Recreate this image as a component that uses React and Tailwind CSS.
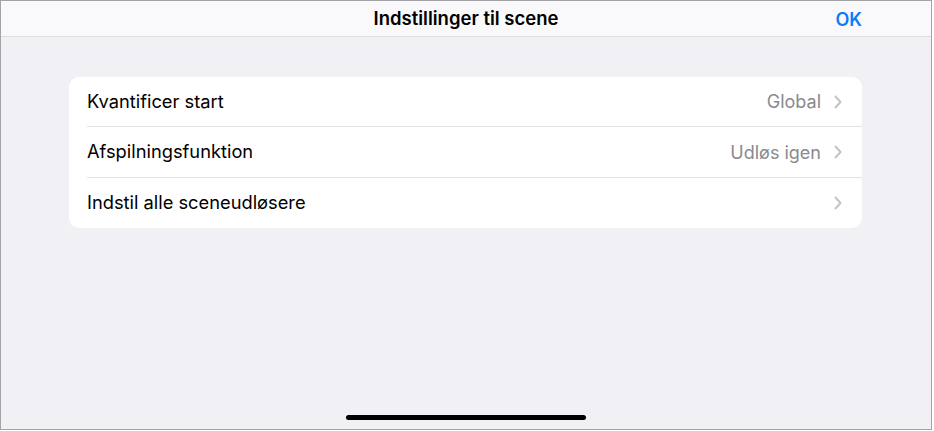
import React from "react";

function Chevron() {
  return (
    <svg width="8" height="14" viewBox="0 0 8 14" className="ml-[13px]">
      <path d="M1.5 1.5 L6.5 7 L1.5 12.5" fill="none" stroke="#c4c4c7" strokeWidth="2" strokeLinecap="round" strokeLinejoin="round" />
    </svg>
  );
}

function Row({ label, value, last, h }) {
  return (
    <div className={"flex pl-[18px] " + h}>
      <div className={"flex flex-1 items-center pr-[20px] " + (last ? "" : "border-b border-[#e3e3e6]")}>
        <span className="flex-1 text-[18.3px] text-black">{label}</span>
        {value && <span className="text-[18px] text-[#8a8a8e]">{value}</span>}
        <Chevron />
      </div>
    </div>
  );
}

export default function App() {
  return (
    <div className="w-[934px] h-[431px] bg-white" style={{ fontFamily: "Inter, 'Noto Sans', sans-serif" }}>
      <div className="w-[932px] h-[430px] border border-[#a3a3a7] bg-[#f1f0f5] flex flex-col">
        <div className="h-[36px] bg-[#f9f9fb] border-b border-[#dcdce0] flex items-center relative">
          <div className="flex-1 text-center text-[18.5px] font-semibold text-black">Indstillinger til scene</div>
          <div className="absolute right-[69px] top-[5px] text-[18px] font-semibold text-[#0a7aff]">OK</div>
        </div>
        <div className="flex-1 px-[68px] pt-[40px] flex flex-col">
          <div className="bg-white rounded-[10px] w-[793px]">
            <Row label="Kvantificer start" value="Global" h="h-[50px]" />
            <Row label="Afspilningsfunktion" value="Udløs igen" h="h-[51px]" />
            <Row label="Indstil alle sceneudløsere" last h="h-[50px]" />
          </div>
          <div className="flex-1" />
          <div className="flex justify-center pb-[9px]">
            <div className="w-[240px] h-[5px] rounded-full bg-black" />
          </div>
        </div>
      </div>
    </div>
  );
}
